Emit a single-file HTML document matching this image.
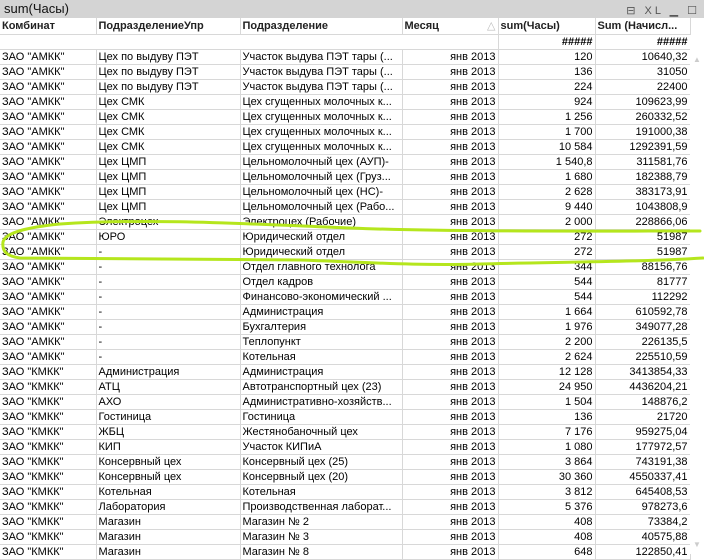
<!DOCTYPE html><html><head><meta charset="utf-8"><style>
body{margin:0;width:704px;height:554px;overflow:hidden;background:#fff;font-family:"Liberation Sans","DejaVu Sans",sans-serif;font-size:11px;color:#000;position:relative}
.title{position:absolute;left:0;top:0;width:704px;height:18px;background:#d4d4d4;font-size:13px;line-height:18px;padding-left:4px;box-sizing:border-box;color:#111}
.icons{position:absolute;right:4px;top:2px;font-size:11px;color:#555;letter-spacing:3px}
table{position:absolute;left:0;top:18px;border-collapse:collapse;table-layout:fixed}
td{height:14px;line-height:14px;padding:0 2px;border-right:1px solid #d8d8d8;border-bottom:1px solid #d8d8d8;white-space:nowrap;overflow:hidden}
tr.h td{font-weight:bold;height:16px;line-height:16px;color:#222}
tr.t td{height:14px;font-weight:bold}
.r{text-align:right}
.sb{position:absolute;left:690px;top:35px;width:14px;height:519px;background:#fff}
</style></head><body>
<div class="title">sum(Часы)<span class="icons">⊟ XL ▁ ☐</span></div>
<table>
<colgroup><col style="width:96px"><col style="width:144px"><col style="width:162px"><col style="width:96px"><col style="width:97px"><col style="width:95px"></colgroup>
<tr class="h"><td>Комбинат</td><td>ПодразделениеУпр</td><td>Подразделение</td><td>Месяц<span style="float:right;color:#bbb;font-weight:normal">△</span></td><td>sum(Часы)</td><td>Sum (Начисл...</td></tr>
<tr class="t"><td style="border-right:none"></td><td style="border-right:none"></td><td style="border-right:none"></td><td></td><td class="r">#####</td><td class="r">#####</td></tr>
<tr><td>ЗАО "АМКК"</td><td>Цех по выдуву ПЭТ</td><td>Участок выдува ПЭТ тары (...</td><td class="r">янв 2013</td><td class="r">120</td><td class="r">10640,32</td></tr>
<tr><td>ЗАО "АМКК"</td><td>Цех по выдуву ПЭТ</td><td>Участок выдува ПЭТ тары (...</td><td class="r">янв 2013</td><td class="r">136</td><td class="r">31050</td></tr>
<tr><td>ЗАО "АМКК"</td><td>Цех по выдуву ПЭТ</td><td>Участок выдува ПЭТ тары (...</td><td class="r">янв 2013</td><td class="r">224</td><td class="r">22400</td></tr>
<tr><td>ЗАО "АМКК"</td><td>Цех СМК</td><td>Цех сгущенных молочных к...</td><td class="r">янв 2013</td><td class="r">924</td><td class="r">109623,99</td></tr>
<tr><td>ЗАО "АМКК"</td><td>Цех СМК</td><td>Цех сгущенных молочных к...</td><td class="r">янв 2013</td><td class="r">1 256</td><td class="r">260332,52</td></tr>
<tr><td>ЗАО "АМКК"</td><td>Цех СМК</td><td>Цех сгущенных молочных к...</td><td class="r">янв 2013</td><td class="r">1 700</td><td class="r">191000,38</td></tr>
<tr><td>ЗАО "АМКК"</td><td>Цех СМК</td><td>Цех сгущенных молочных к...</td><td class="r">янв 2013</td><td class="r">10 584</td><td class="r">1292391,59</td></tr>
<tr><td>ЗАО "АМКК"</td><td>Цех ЦМП</td><td>Цельномолочный цех (АУП)-</td><td class="r">янв 2013</td><td class="r">1 540,8</td><td class="r">311581,76</td></tr>
<tr><td>ЗАО "АМКК"</td><td>Цех ЦМП</td><td>Цельномолочный цех (Груз...</td><td class="r">янв 2013</td><td class="r">1 680</td><td class="r">182388,79</td></tr>
<tr><td>ЗАО "АМКК"</td><td>Цех ЦМП</td><td>Цельномолочный цех (НС)-</td><td class="r">янв 2013</td><td class="r">2 628</td><td class="r">383173,91</td></tr>
<tr><td>ЗАО "АМКК"</td><td>Цех ЦМП</td><td>Цельномолочный цех (Рабо...</td><td class="r">янв 2013</td><td class="r">9 440</td><td class="r">1043808,9</td></tr>
<tr><td>ЗАО "АМКК"</td><td>Электроцех</td><td>Электроцех (Рабочие)</td><td class="r">янв 2013</td><td class="r">2 000</td><td class="r">228866,06</td></tr>
<tr><td>ЗАО "АМКК"</td><td>ЮРО</td><td>Юридический отдел</td><td class="r">янв 2013</td><td class="r">272</td><td class="r">51987</td></tr>
<tr><td>ЗАО "АМКК"</td><td>-</td><td>Юридический отдел</td><td class="r">янв 2013</td><td class="r">272</td><td class="r">51987</td></tr>
<tr><td>ЗАО "АМКК"</td><td>-</td><td>Отдел главного технолога</td><td class="r">янв 2013</td><td class="r">344</td><td class="r">88156,76</td></tr>
<tr><td>ЗАО "АМКК"</td><td>-</td><td>Отдел кадров</td><td class="r">янв 2013</td><td class="r">544</td><td class="r">81777</td></tr>
<tr><td>ЗАО "АМКК"</td><td>-</td><td>Финансово-экономический ...</td><td class="r">янв 2013</td><td class="r">544</td><td class="r">112292</td></tr>
<tr><td>ЗАО "АМКК"</td><td>-</td><td>Администрация</td><td class="r">янв 2013</td><td class="r">1 664</td><td class="r">610592,78</td></tr>
<tr><td>ЗАО "АМКК"</td><td>-</td><td>Бухгалтерия</td><td class="r">янв 2013</td><td class="r">1 976</td><td class="r">349077,28</td></tr>
<tr><td>ЗАО "АМКК"</td><td>-</td><td>Теплопункт</td><td class="r">янв 2013</td><td class="r">2 200</td><td class="r">226135,5</td></tr>
<tr><td>ЗАО "АМКК"</td><td>-</td><td>Котельная</td><td class="r">янв 2013</td><td class="r">2 624</td><td class="r">225510,59</td></tr>
<tr><td>ЗАО "КМКК"</td><td>Администрация</td><td>Администрация</td><td class="r">янв 2013</td><td class="r">12 128</td><td class="r">3413854,33</td></tr>
<tr><td>ЗАО "КМКК"</td><td>АТЦ</td><td>Автотранспортный цех (23)</td><td class="r">янв 2013</td><td class="r">24 950</td><td class="r">4436204,21</td></tr>
<tr><td>ЗАО "КМКК"</td><td>АХО</td><td>Административно-хозяйств...</td><td class="r">янв 2013</td><td class="r">1 504</td><td class="r">148876,2</td></tr>
<tr><td>ЗАО "КМКК"</td><td>Гостиница</td><td>Гостиница</td><td class="r">янв 2013</td><td class="r">136</td><td class="r">21720</td></tr>
<tr><td>ЗАО "КМКК"</td><td>ЖБЦ</td><td>Жестянобаночный цех</td><td class="r">янв 2013</td><td class="r">7 176</td><td class="r">959275,04</td></tr>
<tr><td>ЗАО "КМКК"</td><td>КИП</td><td>Участок КИПиА</td><td class="r">янв 2013</td><td class="r">1 080</td><td class="r">177972,57</td></tr>
<tr><td>ЗАО "КМКК"</td><td>Консервный цех</td><td>Консервный цех (25)</td><td class="r">янв 2013</td><td class="r">3 864</td><td class="r">743191,38</td></tr>
<tr><td>ЗАО "КМКК"</td><td>Консервный цех</td><td>Консервный цех (20)</td><td class="r">янв 2013</td><td class="r">30 360</td><td class="r">4550337,41</td></tr>
<tr><td>ЗАО "КМКК"</td><td>Котельная</td><td>Котельная</td><td class="r">янв 2013</td><td class="r">3 812</td><td class="r">645408,53</td></tr>
<tr><td>ЗАО "КМКК"</td><td>Лаборатория</td><td>Производственная лаборат...</td><td class="r">янв 2013</td><td class="r">5 376</td><td class="r">978273,6</td></tr>
<tr><td>ЗАО "КМКК"</td><td>Магазин</td><td>Магазин № 2</td><td class="r">янв 2013</td><td class="r">408</td><td class="r">73384,2</td></tr>
<tr><td>ЗАО "КМКК"</td><td>Магазин</td><td>Магазин № 3</td><td class="r">янв 2013</td><td class="r">408</td><td class="r">40575,88</td></tr>
<tr><td>ЗАО "КМКК"</td><td>Магазин</td><td>Магазин № 8</td><td class="r">янв 2013</td><td class="r">648</td><td class="r">122850,41</td></tr>
</table>
<div class="sb"><div style="position:absolute;left:3px;top:20px;color:#ccc;font-size:8px">▲</div><div style="position:absolute;left:3px;top:505px;color:#ccc;font-size:8px">▼</div></div>
<svg width="704" height="554" style="position:absolute;left:0;top:0" fill="none" stroke="#b5e61d" stroke-width="3" stroke-linecap="round">
<path d="M700,231 C600,231 450,232 350,228 C250,224 150,218 60,224 C20,228 5,234 3,242 C2,250 5,256 20,258 C100,258 200,259 300,260 C360,262 420,266 480,264 C560,262 640,262 703,258"/>
</svg>
</body></html>
